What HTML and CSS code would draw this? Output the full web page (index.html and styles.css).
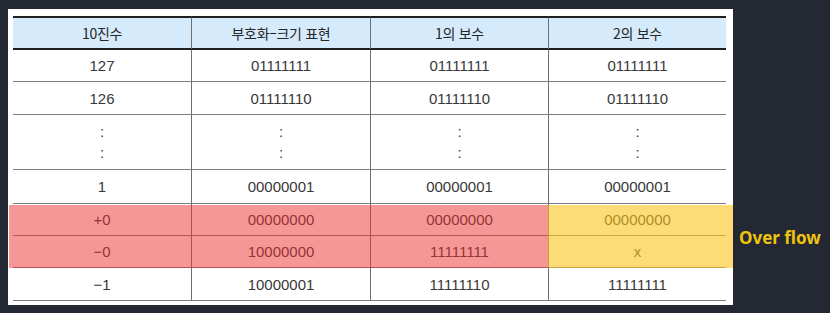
FILE: index.html
```html
<!DOCTYPE html>
<html lang="ko">
<head>
<meta charset="utf-8">
<title>보수 표현 비교</title>
<link rel="stylesheet" href="styles.css">
</head>
<body>
<div class="stage">
  <div class="panel">
    <table class="cmp">
      <colgroup><col class="c1"><col class="c2"><col class="c3"><col class="c4"></colgroup>
      <thead>
        <tr class="h"><th>10진수</th><th>부호화–크기 표현</th><th>1의 보수</th><th>2의 보수</th></tr>
      </thead>
      <tbody>
        <tr class="r32"><td>127</td><td>01111111</td><td>01111111</td><td>01111111</td></tr>
        <tr class="r33"><td>126</td><td>01111110</td><td>01111110</td><td>01111110</td></tr>
        <tr class="dots"><td>:<br>:</td><td>:<br>:</td><td>:<br>:</td><td>:<br>:</td></tr>
        <tr class="r34"><td>1</td><td>00000001</td><td>00000001</td><td>00000001</td></tr>
        <tr class="r32"><td>+0</td><td>00000000</td><td>00000000</td><td>00000000</td></tr>
        <tr class="r32"><td>−0</td><td>10000000</td><td>11111111</td><td>x</td></tr>
        <tr class="r33"><td>−1</td><td>10000001</td><td>11111110</td><td>11111111</td></tr>
      </tbody>
    </table>
    <div class="hl hl-red"></div>
    <div class="hl hl-yellow"></div>
  </div>
  <div class="note">Over flow</div>
</div>
</body>
</html>
```

FILE: styles.css
```css
* { box-sizing: border-box; }
html, body { margin: 0; }
body {
  background: #232833;
  padding: 9px 0 0 8px;
  font-family: "Liberation Sans", "Noto Sans CJK KR", sans-serif;
}
.stage { display: flex; align-items: flex-start; }
.panel {
  position: relative;
  width: 725px;
  height: 296px;
  background: #ffffff;
  padding: 7px 0 0 5px;
}
.cmp {
  border-collapse: separate;
  border-spacing: 0;
  table-layout: fixed;
  width: 713px;
}
.c1 { width: 178px; }
.c2 { width: 179px; }
.c3 { width: 178px; }
.c4 { width: 178px; }
.cmp th, .cmp td {
  padding: 0;
  text-align: center;
  vertical-align: middle;
}
.cmp th + th, .cmp td + td { border-left: 1px solid #6f6f6f; }
.cmp th {
  background: #d5eafa;
  border-top: 2px solid #1f1f1f;
  border-bottom: 2px solid #1f1f1f;
  font-family: "Noto Sans CJK KR", "Liberation Sans", sans-serif;
  font-size: 14px;
  font-weight: normal;
  letter-spacing: -0.3px;
  color: #262626;
}
.cmp td {
  border-bottom: 1px solid #7c7c7c;
  font-size: 15px;
  color: #383838;
}
.h { height: 34px; }
.r32 { height: 32px; }
.r33 { height: 33px; }
.r34 { height: 34px; }
.dots { height: 55px; }
.dots td { line-height: 21px; }
.hl { position: absolute; top: 196px; height: 63px; }
.hl-red { left: 1px; width: 539px; background: rgba(238, 48, 48, 0.5); }
.hl-yellow { left: 540px; right: 0; background: rgba(252, 196, 30, 0.6); }
.note {
  margin: 218px 0 0 6px;
  font-family: "Noto Sans", "Open Sans", sans-serif;
  font-weight: 700;
  font-size: 17px;
  line-height: 22px;
  color: #f0c30f;
}
```
